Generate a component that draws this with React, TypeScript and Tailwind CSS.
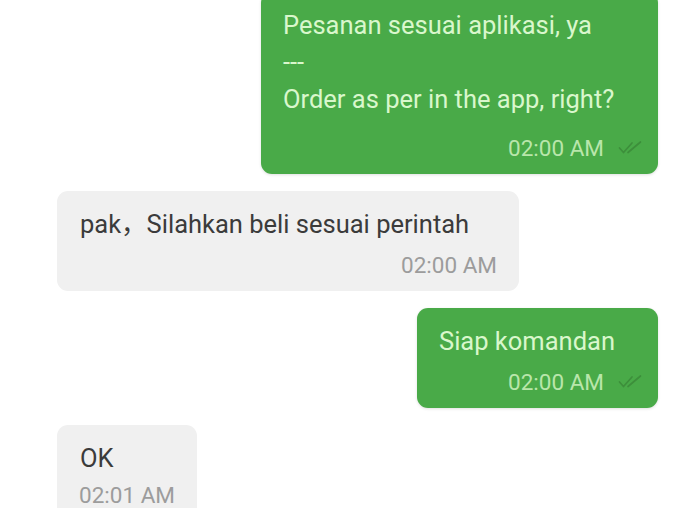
import React from 'react';

type Msg = {
  id: number;
  lines: string[];
  time: string;
  mine: boolean;
  width: string;
  gap: string;
};

const messages: Msg[] = [
  { id: 1, lines: ['Pesanan sesuai aplikasi, ya', '---', 'Order as per in the app, right?'], time: '02:00 AM', mine: true, width: 'w-[397px]', gap: 'mt-[16px]' },
  { id: 2, lines: ['pak，Silahkan beli sesuai perintah'], time: '02:00 AM', mine: false, width: 'w-[462px]', gap: 'mt-[8px]' },
  { id: 3, lines: ['Siap komandan'], time: '02:00 AM', mine: true, width: 'w-[241px]', gap: 'mt-[8px]' },
  { id: 4, lines: ['OK'], time: '02:01 AM', mine: false, width: 'w-[140px]', gap: 'mt-[4px]' },
];

// double tick, drawn thin like the app
const DoubleCheck = () => (
  <svg width="24" height="14" viewBox="0 0 24 14" fill="none" stroke="#3d8f3b" strokeWidth="1.7" strokeLinecap="round" strokeLinejoin="round">
    <path d="M1.5 8l4 4.5L14 3" />
    <path d="M10 12.5L22.5 2" />
  </svg>
);

const Bubble = ({ msg }: { msg: Msg }) => (
  <div
    className={`${msg.width} rounded-[11px] pt-[15px] pb-[12px] ${
      msg.mine ? 'self-end bg-[#49aa48] pl-[22px] pr-[16px] shadow-[0_1px_3px_rgba(0,0,0,0.12)]' : 'self-start bg-[#f0f0f0] pl-[23px] pr-[22px]'
    }`}
  >
    {msg.lines.map((line, i) => (
      <div
        key={i}
        className={`text-[25.5px] leading-[37px] whitespace-nowrap ${msg.mine ? 'text-[#d9f7cc]' : 'text-[#3b3b3b]'}`}
      >
        {line}
      </div>
    ))}
    <div className={`${msg.gap} flex items-center justify-end`}>
      <span className={`text-[22.5px] leading-[28px] whitespace-nowrap ${msg.mine ? 'text-[#b9e6ab]' : 'text-[#9c9c9c]'}`}>{msg.time}</span>
      {msg.mine && (
        <span className="ml-[14px] mt-[-2px]">
          <DoubleCheck />
        </span>
      )}
    </div>
  </div>
);

export default function App() {
  return (
    <div
      className="w-[700px] h-[508px] overflow-hidden bg-white"
      style={{ fontFamily: 'Roboto, "Noto Sans CJK SC", sans-serif' }}
    >
      <div className="flex flex-col gap-[17px] pl-[57px] pr-[42px] -mt-[8px]">
        {messages.map((m) => (
          <Bubble key={m.id} msg={m} />
        ))}
      </div>
    </div>
  );
}
